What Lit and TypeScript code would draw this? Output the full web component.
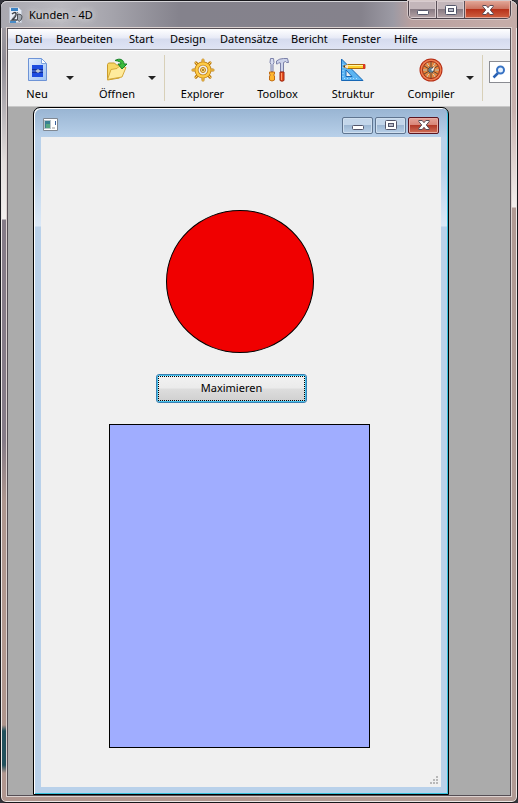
import { LitElement, html, css, svg } from "lit";
import { customElement } from "lit/decorators.js";

const menus = ["Datei", "Bearbeiten", "Start", "Design", "Datensätze", "Bericht", "Fenster", "Hilfe"];

const glyphs = {
  min: html`<svg width="12" height="12" viewBox="0 0 12 12"><rect x=".5" y="6.5" width="11" height="4" rx="1" fill="#fff" stroke="#53566a"/></svg>`,
  max: html`<svg width="12" height="12" viewBox="0 0 12 12"><rect x=".5" y="1.5" width="11" height="9" rx="1" fill="#fff" stroke="#53566a"/><rect x="3.5" y="4.5" width="5" height="3" fill="#b9bcc8" stroke="#53566a"/></svg>`,
  close: html`<svg width="12" height="12" viewBox="0 0 12 12"><path d="M.8 1.5h3.4L6 3.7l1.8-2.2h3.4v1L8.3 6l2.9 3.5v1H7.8L6 8.3l-1.8 2.2H.8v-1L3.7 6 .8 2.5z" fill="#fff" stroke="#5a4a55"/></svg>`,
};

const spokes = (n: number, r1: number, r2: number) =>
  Array.from({ length: n }, (_, i) => {
    const a = (i * 2 * Math.PI) / n;
    return svg`<line x1=${12 + r1 * Math.cos(a)} y1=${12 + r1 * Math.sin(a)} x2=${12 + r2 * Math.cos(a)} y2=${12 + r2 * Math.sin(a)}/>`;
  });

const icons = {
  neu: html`<svg width="24" height="24" viewBox="0 0 24 24">
    <defs><linearGradient id="pg" x1="0" y1="0" x2="1" y2="1"><stop offset="0" stop-color="#e3effd"/><stop offset="1" stop-color="#9fc3f3"/></linearGradient></defs>
    <path d="M3.500.5h13l5 5v17h-18z" fill="url(#pg)" stroke="#6d93d6"/>
    <path d="M16.500.5v5h5z" fill="#fff" stroke="#7fa3de"/>
    <path d="M7 7h11v4l-2 2 2 1v5H7v-5l2-1-2-2z" fill="#1c4de0"/><path d="M7 11h11v4H7z" fill="#12309c"/>
    <path d="M7 13h3M15 13h3" stroke="#5f8df5"/><path d="M10 13l3-2 3 2-3 2z" fill="#b9c7d8"/></svg>`,
  open: html`<svg width="24" height="24" viewBox="0 0 24 24">
    <path d="M2.500 6.500l1-1.500h6l2 2h6v3l-3 10-12 2z" fill="#f7d765" stroke="#c99b2b"/>
    <path d="M2.500 21.500L6 11.500l6-1 2-2 7 1-4 9.500z" fill="#ffeb9c" stroke="#d5a93a"/>
    <path d="M10 2.500C15-.5 19 2 19 6h3l-5 5-4-5h3c0-2-2-3-6-3.500z" fill="#3cba3b" stroke="#16812a"/></svg>`,
  explorer: html`<svg width="24" height="24" viewBox="0 0 24 24">
    <g stroke="#bd7d14" stroke-width="3" stroke-linecap="round">${spokes(8, 8, 10)}</g>
    <circle cx="12" cy="12" r="6.500" fill="none" stroke="#bd7d14" stroke-width="4"/>
    <circle cx="12" cy="12" r="6.500" fill="none" stroke="#ffcb45" stroke-width="2.400"/>
    <g stroke="#ffd763">${spokes(8, 8, 11)}</g>
    <circle cx="12" cy="12" r="2.500" fill="#ffe28a" stroke="#bd7d14"/><circle cx="12" cy="12" r="1" fill="#9a6410"/></svg>`,
  toolbox: html`<svg width="24" height="24" viewBox="0 0 24 24">
    <path d="M4.500.5h3l.5 4-1 2v7H5v-7l-1-2z" fill="#d7dcef" stroke="#7b80a8"/>
    <path d="M3.500 14h5v2l-1 1 1 1v4q-2.500 2-5 0v-4l1-1-1-1z" fill="#ffb62e" stroke="#c36d13"/>
    <path d="M10.500 3q3-2.500 7-2.500h4l1 4h-2l-1-1-2 1v9.500h-3V5q-2-1-3 1h-1z" fill="#ccd2ea" stroke="#7b80a8"/>
    <path d="M14 14h4v8.500q-2 1.500-4 0z" fill="#e64b1d" stroke="#9c2912"/><path d="M15.500 15v7" stroke="#ff9a66"/></svg>`,
  struktur: html`<svg width="26" height="24" viewBox="0 0 26 24">
    <path d="M1.500 1v21.500H23zM6 12l6 6.500H6z" fill="#5bb4f2" fill-rule="evenodd" stroke="#1767b5"/>
    <path d="M3 6v14M4 20.500h14" stroke="#b6e1ff" stroke-dasharray="1 2"/>
    <path d="M3 8.500L8 6.500h17v4H8z" fill="#ffd02f" stroke="#ad6a0b"/><path d="M8 7.500h15" stroke="#fff5a0"/><path d="M23 6h2v5h-2z" fill="#dc3426"/><path d="M3 8.500L8 6.500v4z" fill="#ffe6c1"/><path d="M3 8l2-.5v2z" fill="#333"/></svg>`,
  compiler: html`<svg width="24" height="24" viewBox="0 0 24 24">
    <circle cx="12" cy="12" r="11.500" fill="#b42b13"/><circle cx="12" cy="12" r="10.500" fill="#ee7f50"/>
    <circle cx="12" cy="12" r="8.500" fill="#e8863c" stroke="#9c2c16"/>
    <g stroke="#5d4534">${spokes(12, 2, 8)}</g><g stroke="#f8e0b8">${spokes(6, 4, 8)}</g>
    <circle cx="12" cy="12" r="2.500" fill="#5a7c91"/><path d="M12 12l4-4-2 5z" fill="#fff"/></svg>`,
};

@customElement("app-root")
export class AppRoot extends LitElement {
  static styles = css`
    :host { display: block; font: 11px/16px "Noto Sans", "Open Sans", sans-serif; color: #000; background: #33343c; }
    * { box-sizing: border-box; }
    button { font: inherit; color: inherit; padding: 0; margin: 0; border: 0; background: none; }
    svg { display: block; }
    .frame {
      min-height: 100vh; display: flex; flex-direction: column; padding: 0 6px 6px;
      border: 1px solid #17171b; border-radius: 7px 7px 6px 6px;
      box-shadow: inset 0 0 0 1px #ece7e6;
      background:
        linear-gradient(#c5aaa6 0 50px, #c9b2af 110px, #f3eeec 206px, #b19a94 207px) right / 50% 100% no-repeat,
        linear-gradient(#a9a6ad, #8f8b94 60px, #e2dddc 160px, #f2efee 218px, #857b87 219px, #857b87 440px, #ad968f 500px, #b2988f 640px, #ad948c 724px, #22505c 730px, #22505c 764px, #b0968f 772px) left / 50% 100% no-repeat;
    }
    .caption { height: 27px; display: flex; margin: 0 -6px; padding: 0 6px 0 7px; border-radius: 6px 6px 0 0; background: linear-gradient(90deg, #a8a7af, #b9b8be 60px, #a5a4ac 110px, #84828c 180px, #85828c 360px, #9c9aa4 392px, #b8a09f 410px, #c5aca8 500px); box-shadow: inset 0 1px #d5d4d8; }
    .title { flex: 1; display: flex; align-items: center; gap: 5px; }
    .title span { text-shadow: 0 0 6px #ddd, 0 0 6px #ddd; }
    .capbtns { display: flex; height: 18px; border: 1px solid #4d434b; border-top: 0; border-radius: 0 0 5px 5px; overflow: hidden; box-shadow: 0 0 0 1px #d5c8c8; }
    .capbtns button { width: 28px; display: grid; place-items: center; background: linear-gradient(#c3b6ba 0 45%, #897c84 50%, #b5a3a6); box-shadow: inset 0 0 0 1px #d8cccf; border-right: 1px solid #5a5058; }
    .capbtns .x { width: 45px; border: 0; background: linear-gradient(#dc9c8c 0 10%, #cc7461 45%, #b7321a 50%, #cf6141); box-shadow: inset 0 0 0 1px #e5a696; }
    .client { flex: 1; display: flex; flex-direction: column; border: 1px solid #554e54; overflow: hidden; box-shadow: 0 0 0 1px #dcd2d0; }
    .menu { height: 20px; display: grid; grid-template-columns: 41px 73px 41px 50px 71px 51px 52px 1fr; padding-left: 7px; background: linear-gradient(#fff, #e7eaf6 45%, #d5dbee 50%, #dfe4f4); }
    .menu button { text-align: left; line-height: 20px; }
    .tools { height: 58px; border-top: 1px solid #8f9096; border-bottom: 1px solid #c8c8c8; background: #f0f0f0; box-shadow: inset 0 1px #fff; display: grid; grid-template-columns: 58px 8px 14px 58px 2px 8px 9px 75px 75px 76px 5px 70px 8px 9px 1fr; align-items: center; }
    .tool { display: grid; justify-items: center; gap: 4px; padding-top: 4px; }
    .arrow { border: 4px solid transparent; border-top-color: #222; border-bottom: 0; height: 4px; width: 8px; }
    .sep { justify-self: end; width: 1px; height: 46px; background: #d8d0b8; }
    .search { display: flex; align-items: center; height: 22px; margin: 0 0 12px 6px; border: 1px solid #8a8c92; border-right: 0; background: #fff; padding-left: 2px; overflow: hidden; }
    .search input { border: 0; min-width: 0; width: 100%; outline: 0; padding: 0; }
    .search svg { flex: none; }
    .mdi { flex: 1; display: flex; background: #ababab; padding: 0 61px 0 25px; }
    .child { flex: 1; display: flex; flex-direction: column; border: 1px solid #000; border-radius: 7px 7px 0 0; background: linear-gradient(#98b4d2, #b9d1ea 30px, #b9d1ea 60px, #dce9f7 118px, #b9d1ea 119px); box-shadow: inset 1px 1px #fff, inset -1px -1px #35c0dc; padding: 0 7px 7px; }
    .childcap { height: 29px; display: flex; justify-content: space-between; align-items: center; padding: 5px 2px 0; }
    .childbtns { display: flex; gap: 2px; }
    .childbtns button { width: 31px; height: 17px; display: grid; place-items: center; border: 1px solid #5f7590; border-radius: 2px; background: linear-gradient(#c3d6ea 0 45%, #9db7d3 50%, #b8d0e8); box-shadow: inset 0 0 0 1px #cfdfef; }
    .childbtns .x { border-color: #5b1520; background: linear-gradient(#e5a398, #d98678 45%, #b33a28 50%, #cf6f58); box-shadow: inset 0 0 0 1px #e8aca2; }
    .form { flex: 1; display: flex; flex-direction: column; align-items: flex-start; background: #f0f0f0; padding: 73px 2px 2px 68px; }
    .circle { margin-left: 57px; width: 148px; height: 143px; border-radius: 50%; border: 1px solid #000; background: #f00000; }
    .push { margin: 21px 0 21px 47px; width: 151px; height: 29px; border: 1px solid #3c7fb1; border-radius: 3px; background: linear-gradient(#f2f2f2, #ebebeb 48%, #dddddd 52%, #cfcfcf); box-shadow: inset 0 0 0 1px #46c4ee; padding: 1px; }
    .push span { display: block; height: 25px; border: 1px dotted #000; line-height: 22px; }
    .box { width: 261px; height: 324px; border: 1px solid #000; background: #a0adff; }
    .grip { margin: auto 0 0 auto; }
  `;

  render() {
    return html`
      <div class="frame">
        <header class="caption">
          <div class="title">
            <svg width="16" height="18" viewBox="0 0 16 18"><path d="M1.500 1.500h9l3 3v12h-12z" fill="#e8edf5" stroke="#c0c6d2"/><path d="M3 2h7v3H3z" fill="#3c83c4"/><path d="M2 15h6v2H2z" fill="#4a8cc8"/><path d="M4 8q4-3 4 0t-4 6h5" fill="none" stroke="#3c4047" stroke-width="1.500"/><path d="M9.500 8q6 0 4 5-2 4-4 1z" fill="#a4aab2" stroke="#4c5057"/><path d="M4 13l6-7" stroke="#70757c"/></svg>
            <span>Kunden - 4D</span>
          </div>
          <div class="capbtns">
            <button aria-label="Minimieren">${glyphs.min}</button>
            <button aria-label="Maximieren">${glyphs.max}</button>
            <button class="x" aria-label="Schließen">${glyphs.close}</button>
          </div>
        </header>
        <main class="client">
          <nav class="menu">${menus.map((m) => html`<button>${m}</button>`)}</nav>
          <div class="tools">
            ${this.tool("Neu", icons.neu)}
            <button class="arrow" aria-label="Neu: Auswahl"></button><i></i>
            ${this.tool("Öffnen", icons.open)}<i></i>
            <button class="arrow" aria-label="Öffnen: Auswahl"></button>
            <i class="sep"></i>
            ${this.tool("Explorer", icons.explorer)}
            ${this.tool("Toolbox", icons.toolbox)}
            ${this.tool("Struktur", icons.struktur)}
            <i></i>
            ${this.tool("Compiler", icons.compiler)}
            <button class="arrow" aria-label="Compiler: Auswahl"></button>
            <i class="sep"></i>
            <label class="search"><svg width="14" height="14" viewBox="0 0 14 14"><path d="M1.500 12.500L6 8" stroke="#2a62b4" stroke-width="2.500"/><circle cx="8.500" cy="5" r="3.500" fill="#e6f2ff" stroke="#3873c4" stroke-width="2"/></svg><input type="text" aria-label="Suchen" /></label>
          </div>
          <div class="mdi">
            <section class="child">
              <header class="childcap">
                <svg width="16" height="14" viewBox="0 0 16 14"><path d="M.5.5h14v12H.5z" fill="#fff" stroke="#808892"/><path d="M1 2h7v9H1z" fill="#b8c4cc"/><path d="M2 3h5v7H2z" fill="#397f92"/><path d="M3 6h4v4H3z" fill="#56a581"/><path d="M9 9h3v2H9z" fill="#ccc"/><path d="M12 3h1v4h-1z" fill="#3b63a0"/></svg>
                <div class="childbtns">
                  <button aria-label="Minimieren">${glyphs.min}</button>
                  <button aria-label="Maximieren">${glyphs.max}</button>
                  <button class="x" aria-label="Schließen">${glyphs.close}</button>
                </div>
              </header>
              <div class="form">
                <div class="circle"></div>
                <button class="push"><span>Maximieren</span></button>
                <div class="box"></div>
                <svg class="grip" width="9" height="9" viewBox="0 0 9 9" fill="#b8b8b8"><path d="M6 0h2v2H6zM3 3h2v2H3zM6 3h2v2H6zM0 6h2v2H0zM3 6h2v2H3zM6 6h2v2H6z"/></svg>
              </div>
            </section>
          </div>
        </main>
      </div>`;
  }

  private tool(label: string, icon: unknown) {
    return html`<button class="tool">${icon}<span>${label}</span></button>`;
  }
}
